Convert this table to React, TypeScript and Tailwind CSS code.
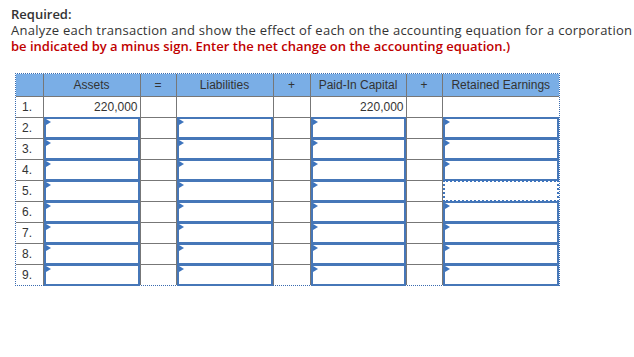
const COLS: { label: string; w: number; input: boolean }[] = [
  { label: "", w: 27, input: false },
  { label: "Assets", w: 97, input: true },
  { label: "=", w: 36, input: false },
  { label: "Liabilities", w: 97, input: true },
  { label: "+", w: 37, input: false },
  { label: "Paid-In Capital", w: 96, input: true },
  { label: "+", w: 36, input: false },
  { label: "Retained Earnings", w: 117, input: true },
];

const ROWS = [1, 2, 3, 4, 5, 6, 7, 8, 9];

function InputCell({ focused }: { focused?: boolean }) {
  return (
    <div
      className={
        "relative -my-px h-[22px] w-full " +
        (focused ? "border-2 border-dotted border-[#3d74bd]" : "border-2 border-[#4677b8]")
      }
    >
      {!focused && (
        <span className="absolute left-0 top-0 h-0 w-0 border-y-[3px] border-l-[5px] border-y-transparent border-l-[#3d74bd]" />
      )}
    </div>
  );
}

export default function App() {
  return (
    <div className="h-[357px] w-[634px] overflow-hidden bg-white">
      <div className="pl-[11px] pt-[6px] font-['Open_Sans',sans-serif] text-[13px] leading-[16px] text-[#333]">
        <p className="font-semibold">Required:</p>
        <p className="whitespace-nowrap tracking-[0.25px]">
          Analyze each transaction and show the effect of each on the accounting equation for a corporation
        </p>
        <p className="whitespace-nowrap font-semibold text-[#c00000]">
          be indicated by a minus sign. Enter the net change on the accounting equation.)
        </p>
      </div>

      <div className="ml-[15px] mt-[19px] w-fit border border-dotted border-[#3a6cb0]">
        <table className="table-fixed border-collapse font-['Liberation_Sans',Arial,sans-serif] text-[12px] text-[#333]">
          <colgroup>
            {COLS.map((c, i) => (
              <col key={i} style={{ width: c.w }} />
            ))}
          </colgroup>
          <thead>
            <tr className="bg-[#7aaee6]">
              {COLS.map((c, i) => (
                <th
                  key={i}
                  className={
                    "h-[22px] border-x border-b border-[#777] p-0 pt-px text-center font-normal " +
                    (i === 0 ? "border-l-0" : "") +
                    (i === COLS.length - 1 ? " border-r-0" : "")
                  }
                >
                  {c.label}
                </th>
              ))}
            </tr>
          </thead>
          <tbody>
            {ROWS.map((r) => (
              <tr key={r} className="h-[21px]">
                {COLS.map((c, i) => (
                  <td
                    key={i}
                    className={
                      "h-[21px] border border-[#777] p-0 leading-[20px] " +
                      (i === 0 ? "border-l-0 pl-[6px] text-left" : "") +
                      (i === COLS.length - 1 ? " border-r-0" : "") +
                      (r === ROWS.length ? " border-b-0" : "")
                    }
                  >
                    {i === 0 ? (
                      `${r}.`
                    ) : r === 1 ? (
                      i === 1 || i === 5 ? (
                        <div className="pr-[2px] text-right">220,000</div>
                      ) : null
                    ) : c.input ? (
                      <InputCell focused={r === 5 && i === 7} />
                    ) : null}
                  </td>
                ))}
              </tr>
            ))}
          </tbody>
        </table>
      </div>
    </div>
  );
}
